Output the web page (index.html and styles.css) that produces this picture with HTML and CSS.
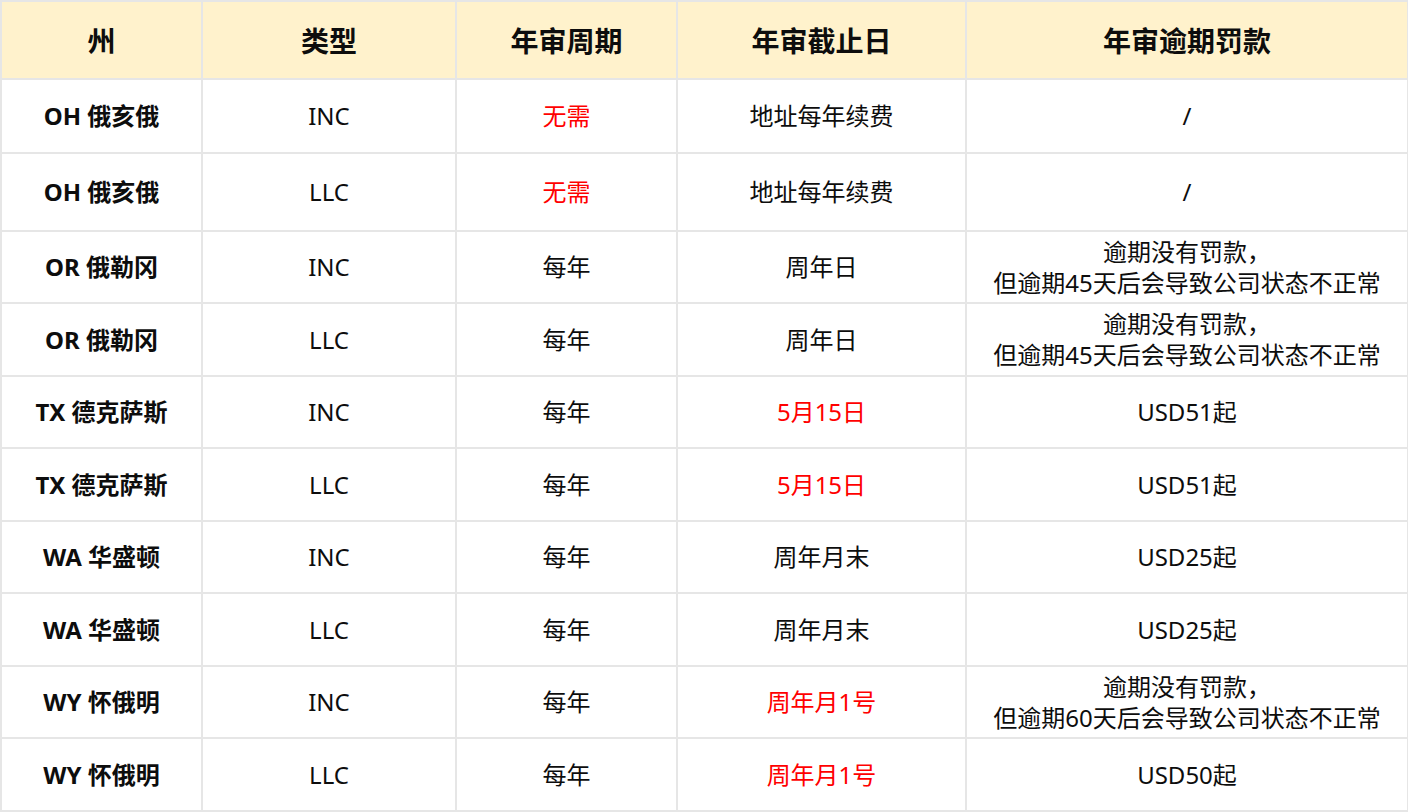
FILE: index.html
```html
<!DOCTYPE html>
<html lang="zh-CN">
<head>
<meta charset="utf-8">
<title>年审表</title>
<link rel="stylesheet" href="styles.css">
</head>
<body>
<table class="grid">
  <colgroup>
    <col class="c1"><col class="c2"><col class="c3"><col class="c4"><col class="c5">
  </colgroup>
  <thead>
    <tr class="head">
      <th>州</th><th>类型</th><th>年审周期</th><th>年审截止日</th><th>年审逾期罚款</th>
    </tr>
  </thead>
  <tbody>
    <tr class="r-a"><td class="st">OH 俄亥俄</td><td>INC</td><td class="red">无需</td><td>地址每年续费</td><td>/</td></tr>
    <tr class="r-b"><td class="st">OH 俄亥俄</td><td>LLC</td><td class="red">无需</td><td>地址每年续费</td><td>/</td></tr>
    <tr class="r"><td class="st">OR 俄勒冈</td><td>INC</td><td>每年</td><td>周年日</td><td>逾期没有罚款，<br>但逾期45天后会导致公司状态不正常</td></tr>
    <tr class="r"><td class="st">OR 俄勒冈</td><td>LLC</td><td>每年</td><td>周年日</td><td>逾期没有罚款，<br>但逾期45天后会导致公司状态不正常</td></tr>
    <tr class="r"><td class="st">TX 德克萨斯</td><td>INC</td><td>每年</td><td class="red">5月15日</td><td>USD51起</td></tr>
    <tr class="r"><td class="st">TX 德克萨斯</td><td>LLC</td><td>每年</td><td class="red">5月15日</td><td>USD51起</td></tr>
    <tr class="r"><td class="st">WA 华盛顿</td><td>INC</td><td>每年</td><td>周年月末</td><td>USD25起</td></tr>
    <tr class="r"><td class="st">WA 华盛顿</td><td>LLC</td><td>每年</td><td>周年月末</td><td>USD25起</td></tr>
    <tr class="r"><td class="st">WY 怀俄明</td><td>INC</td><td>每年</td><td class="red">周年月1号</td><td>逾期没有罚款，<br>但逾期60天后会导致公司状态不正常</td></tr>
    <tr class="r"><td class="st">WY 怀俄明</td><td>LLC</td><td>每年</td><td class="red">周年月1号</td><td>USD50起</td></tr>
  </tbody>
</table>
</body>
</html>
```
FILE: styles.css
```css
html, body {
  margin: 0;
  padding: 0;
  background: #ffffff;
}
body {
  font-family: "Noto Sans", "Noto Sans CJK SC", sans-serif;
  color: #0d0d0d;
}
.grid {
  border-collapse: collapse;
  width: 1407px;
  table-layout: fixed;
}
.c1 { width: 201px; }
.c2 { width: 254px; }
.c3 { width: 221px; }
.c4 { width: 289px; }
.c5 { width: 442px; }
.grid th, .grid td {
  border: 2px solid #e6e6e6;
  text-align: center;
  vertical-align: middle;
  padding: 0;
}
.grid th {
  background: #fff2cc;
  font-size: 28px;
  font-weight: 700;
  color: #0d0d0d;
}
.grid td {
  font-size: 24px;
  line-height: 31px;
  font-weight: 400;
}
.grid td.st {
  font-weight: 700;
}
.grid td.red {
  color: #ff0000;
}
.head { height: 78px; }
.r-a { height: 73.5px; }
.r-b { height: 78px; }
.r { height: 72.5px; }
```
